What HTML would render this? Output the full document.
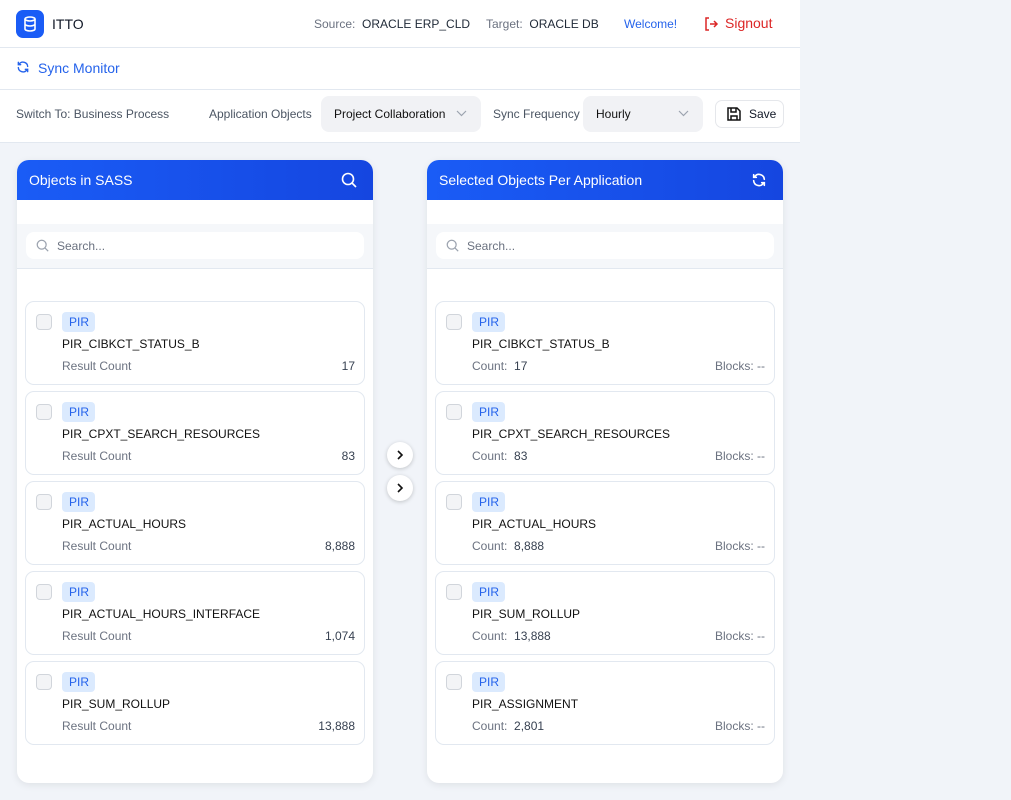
<!DOCTYPE html>
<html><head><meta charset="utf-8"><style>
*{box-sizing:border-box;margin:0;padding:0}
body{width:1011px;height:800px;overflow:hidden;background:#f1f4f9;font-family:"Liberation Sans",Arial,sans-serif;position:relative;color:#111827}
.abs{position:absolute}
.top{left:0;width:800px;background:#fff}
.hdr{top:0;height:48px;border-bottom:1px solid #e2e8f0}
.sync{top:48px;height:42px;border-bottom:1px solid #e2e8f0}
.tb{top:90px;height:53px;border-bottom:1px solid #e2e8f0}
.sel{background:#f1f2f5;border-radius:8px;height:36px;top:96px;font-size:12px;color:#111;padding:11px 0 0 13px;overflow:hidden;white-space:nowrap}
.panel{top:160px;width:356px;height:623px;background:#fff;border-radius:12px;box-shadow:0 2px 8px rgba(0,0,0,.08);overflow:hidden}
.ph{height:40px;background:linear-gradient(90deg,#1a5cf6,#1546e0);color:#fff;font-size:14px;padding:12px 0 0 12px;position:relative}
.sa{position:absolute;top:64px;left:0;right:0;height:45px;background:#f5f7fa;border-bottom:1px solid #e2e8f0}
.si{position:absolute;left:9px;right:9px;top:8px;height:27px;background:#fff;border-radius:8px;font-size:12px;color:#6b7280;padding:7px 0 0 31px}
.card{position:absolute;left:8px;width:340px;height:84px;border:1px solid #e2e8f0;border-radius:9px;background:#fff}
.cb{position:absolute;left:10px;top:12px;width:16px;height:16px;border:1px solid #d1d5db;border-radius:4px;background:#f3f4f6}
.tag{position:absolute;left:36px;top:10px;height:20px;width:33px;background:#dbeafe;border-radius:4px;color:#2563eb;font-size:12px;padding:3px 0 0 7px}
.nm{position:absolute;left:36px;top:35px;font-size:12px;color:#111}
.rl{position:absolute;left:36px;top:57px;font-size:12px;color:#6b7280}
.rv{position:absolute;right:9px;top:57px;font-size:12px;color:#374151}
.arr{left:387px;width:26px;height:26px;border-radius:50%;background:#fff;box-shadow:0 1px 4px rgba(0,0,0,.2)}
</style></head><body>
<div class="abs top hdr">
 <div class="abs" style="left:16px;top:10px;width:28px;height:28px;background:#1a5cf6;border-radius:7px">
  <svg width="28" height="28" viewBox="0 0 28 28" fill="none" stroke="#fff" stroke-width="1.6"><ellipse cx="14" cy="9" rx="5" ry="2"/><path d="M9 9v10c0 1.1 2.2 2 5 2s5-.9 5-2V9M9 14c0 1.1 2.2 2 5 2s5-.9 5-2"/></svg>
 </div>
 <div class="abs" style="left:52px;top:16px;font-size:14px">ITTO</div>
 <div class="abs" style="left:314px;top:17px;font-size:12px;color:#6b7280">Source:&nbsp; <span style="color:#1f2937">ORACLE ERP_CLD</span></div>
 <div class="abs" style="left:486px;top:17px;font-size:12px;color:#6b7280">Target:&nbsp; <span style="color:#1f2937">ORACLE DB</span></div>
 <div class="abs" style="left:624px;top:17px;font-size:12px;color:#2563eb">Welcome!</div>
 <svg class="abs" style="left:703px;top:16px" width="16" height="16" viewBox="0 0 16 16" fill="none" stroke="#dc2626" stroke-width="1.5"><path d="M6 2H3v12h3M7 8h7M11 5l3 3-3 3"/></svg>
 <div class="abs" style="left:725px;top:15px;font-size:14px;color:#dc2626">Signout</div>
</div>
<div class="abs top sync">
 <svg class="abs" style="left:16px;top:12px" width="14" height="14" viewBox="0 0 24 24" fill="none" stroke="#2563eb" stroke-width="2.4" stroke-linecap="round"><path d="M20 11a8 8 0 0 0-14.5-4M4 4v4h4M4 13a8 8 0 0 0 14.5 4M20 20v-4h-4"/></svg>
 <div class="abs" style="left:38px;top:12px;font-size:14px;color:#2563eb">Sync Monitor</div>
</div>
<div class="abs top tb">
 <div class="abs" style="left:16px;top:17px;font-size:12px;color:#4b5563">Switch To: Business Process</div>
 <div class="abs" style="left:209px;top:17px;font-size:12px;color:#4b5563">Application Objects</div>
 <div class="abs" style="left:493px;top:17px;font-size:12px;color:#4b5563">Sync Frequency</div>
 <div class="abs" style="left:715px;top:10px;width:69px;height:28px;border:1px solid #e5e7eb;border-radius:7px;font-size:12px;padding:6px 0 0 33px">Save
  <svg class="abs" style="left:10px;top:5px" width="16" height="16" viewBox="0 0 16 16" fill="none" stroke="#111" stroke-width="1.5"><path d="M2 2h9l3 3v9H2z M5 2v4h5V2 M5 14V10h6v4"/></svg></div>
</div>
<div class="abs sel" style="left:321px;width:160px;padding-right:36px"><span style="display:block;overflow:hidden">Project Collaboration</span><svg class="abs" style="right:14px;top:14px" width="11" height="7" viewBox="0 0 11 7" fill="none" stroke="#9ca3af" stroke-width="1.2"><path d="M1 1l4.5 4.5L10 1"/></svg></div>
<div class="abs sel" style="left:583px;width:120px">Hourly<svg class="abs" style="right:14px;top:14px" width="11" height="7" viewBox="0 0 11 7" fill="none" stroke="#9ca3af" stroke-width="1.2"><path d="M1 1l4.5 4.5L10 1"/></svg></div>

<div class="abs panel" style="left:17px">
 <div class="ph">Objects in SASS<svg class="abs" style="right:16px;top:12px" width="16" height="16" viewBox="0 0 16 16" fill="none" stroke="#fff" stroke-width="1.6"><circle cx="7" cy="7" r="5.5"/><path d="M11 11l4 4"/></svg></div>
 <div class="sa"><div class="si"><svg class="abs" style="left:10px;top:7px" width="13" height="13" viewBox="0 0 16 16" fill="none" stroke="#9ca3af" stroke-width="1.5"><circle cx="7" cy="7" r="5.5"/><path d="M11 11l4 4"/></svg>Search...</div></div>
 <div class="card" style="top:141px"><div class="cb"></div><div class="tag">PIR</div><div class="nm">PIR_CIBKCT_STATUS_B</div><div class="rl">Result Count</div><div class="rv">17</div></div>
 <div class="card" style="top:231px"><div class="cb"></div><div class="tag">PIR</div><div class="nm">PIR_CPXT_SEARCH_RESOURCES</div><div class="rl">Result Count</div><div class="rv">83</div></div>
 <div class="card" style="top:321px"><div class="cb"></div><div class="tag">PIR</div><div class="nm">PIR_ACTUAL_HOURS</div><div class="rl">Result Count</div><div class="rv">8,888</div></div>
 <div class="card" style="top:411px"><div class="cb"></div><div class="tag">PIR</div><div class="nm">PIR_ACTUAL_HOURS_INTERFACE</div><div class="rl">Result Count</div><div class="rv">1,074</div></div>
 <div class="card" style="top:501px"><div class="cb"></div><div class="tag">PIR</div><div class="nm">PIR_SUM_ROLLUP</div><div class="rl">Result Count</div><div class="rv">13,888</div></div>
</div>

<div class="abs arr" style="top:442px"><svg class="abs" style="left:9px;top:8px" width="8" height="10" viewBox="0 0 8 10" fill="none" stroke="#111" stroke-width="1.6"><path d="M2 1l4 4-4 4"/></svg></div>
<div class="abs arr" style="top:475px"><svg class="abs" style="left:9px;top:8px" width="8" height="10" viewBox="0 0 8 10" fill="none" stroke="#111" stroke-width="1.6"><path d="M2 1l4 4-4 4"/></svg></div>

<div class="abs panel" style="left:427px">
 <div class="ph">Selected Objects Per Application<svg class="abs" style="right:16px;top:12px" width="16" height="16" viewBox="0 0 24 24" fill="none" stroke="#fff" stroke-width="2.4" stroke-linecap="round"><path d="M20 11a8 8 0 0 0-14.5-4M4 4v4h4M4 13a8 8 0 0 0 14.5 4M20 20v-4h-4"/></svg></div>
 <div class="sa"><div class="si"><svg class="abs" style="left:10px;top:7px" width="13" height="13" viewBox="0 0 16 16" fill="none" stroke="#9ca3af" stroke-width="1.5"><circle cx="7" cy="7" r="5.5"/><path d="M11 11l4 4"/></svg>Search...</div></div>
 <div class="card" style="top:141px"><div class="cb"></div><div class="tag">PIR</div><div class="nm">PIR_CIBKCT_STATUS_B</div><div class="rl">Count:&nbsp; <span style="color:#374151">17</span></div><div class="rv" style="color:#6b7280">Blocks: --</div></div>
 <div class="card" style="top:231px"><div class="cb"></div><div class="tag">PIR</div><div class="nm">PIR_CPXT_SEARCH_RESOURCES</div><div class="rl">Count:&nbsp; <span style="color:#374151">83</span></div><div class="rv" style="color:#6b7280">Blocks: --</div></div>
 <div class="card" style="top:321px"><div class="cb"></div><div class="tag">PIR</div><div class="nm">PIR_ACTUAL_HOURS</div><div class="rl">Count:&nbsp; <span style="color:#374151">8,888</span></div><div class="rv" style="color:#6b7280">Blocks: --</div></div>
 <div class="card" style="top:411px"><div class="cb"></div><div class="tag">PIR</div><div class="nm">PIR_SUM_ROLLUP</div><div class="rl">Count:&nbsp; <span style="color:#374151">13,888</span></div><div class="rv" style="color:#6b7280">Blocks: --</div></div>
 <div class="card" style="top:501px"><div class="cb"></div><div class="tag">PIR</div><div class="nm">PIR_ASSIGNMENT</div><div class="rl">Count:&nbsp; <span style="color:#374151">2,801</span></div><div class="rv" style="color:#6b7280">Blocks: --</div></div>
</div>
</body></html>
